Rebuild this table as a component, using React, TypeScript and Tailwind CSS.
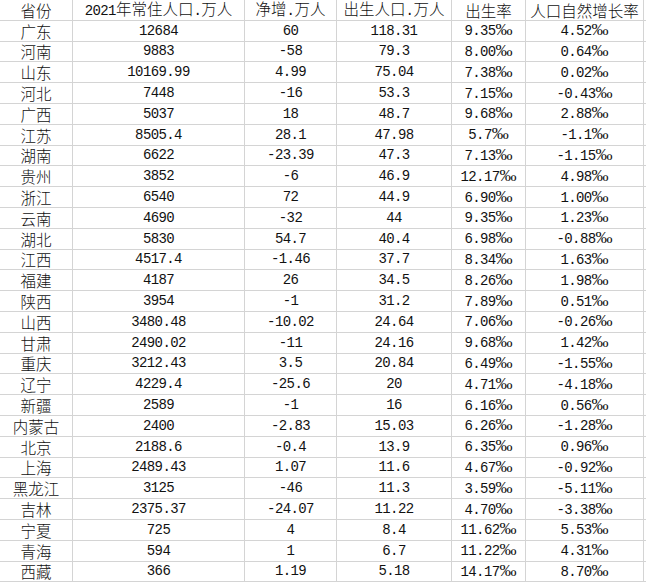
import React from "react";

const rows: string[][] = [
  ["广东", "12684", "60", "118.31", "9.35‰", "4.52‰"],
  ["河南", "9883", "-58", "79.3", "8.00‰", "0.64‰"],
  ["山东", "10169.99", "4.99", "75.04", "7.38‰", "0.02‰"],
  ["河北", "7448", "-16", "53.3", "7.15‰", "-0.43‰"],
  ["广西", "5037", "18", "48.7", "9.68‰", "2.88‰"],
  ["江苏", "8505.4", "28.1", "47.98", "5.7‰", "-1.1‰"],
  ["湖南", "6622", "-23.39", "47.3", "7.13‰", "-1.15‰"],
  ["贵州", "3852", "-6", "46.9", "12.17‰", "4.98‰"],
  ["浙江", "6540", "72", "44.9", "6.90‰", "1.00‰"],
  ["云南", "4690", "-32", "44", "9.35‰", "1.23‰"],
  ["湖北", "5830", "54.7", "40.4", "6.98‰", "-0.88‰"],
  ["江西", "4517.4", "-1.46", "37.7", "8.34‰", "1.63‰"],
  ["福建", "4187", "26", "34.5", "8.26‰", "1.98‰"],
  ["陕西", "3954", "-1", "31.2", "7.89‰", "0.51‰"],
  ["山西", "3480.48", "-10.02", "24.64", "7.06‰", "-0.26‰"],
  ["甘肃", "2490.02", "-11", "24.16", "9.68‰", "1.42‰"],
  ["重庆", "3212.43", "3.5", "20.84", "6.49‰", "-1.55‰"],
  ["辽宁", "4229.4", "-25.6", "20", "4.71‰", "-4.18‰"],
  ["新疆", "2589", "-1", "16", "6.16‰", "0.56‰"],
  ["内蒙古", "2400", "-2.83", "15.03", "6.26‰", "-1.28‰"],
  ["北京", "2188.6", "-0.4", "13.9", "6.35‰", "0.96‰"],
  ["上海", "2489.43", "1.07", "11.6", "4.67‰", "-0.92‰"],
  ["黑龙江", "3125", "-46", "11.3", "3.59‰", "-5.11‰"],
  ["吉林", "2375.37", "-24.07", "11.22", "4.70‰", "-3.38‰"],
  ["宁夏", "725", "4", "8.4", "11.62‰", "5.53‰"],
  ["青海", "594", "1", "6.7", "11.22‰", "4.31‰"],
  ["西藏", "366", "1.19", "5.18", "14.17‰", "8.70‰"],
];

const widths = ["w-[73px]", "w-[172px]", "w-[92px]", "w-[115px]", "w-[74px]", "w-[118px]"];

const cjk = "font-['Noto_Sans_CJK_SC',sans-serif] text-[15.5px] leading-[18px] font-light";
const mono = "font-['Liberation_Mono',monospace] text-[14px] leading-[18px] tracking-[-0.6px]";
const hcjk = "font-['Noto_Sans_CJK_SC',sans-serif] text-[15.5px] leading-[14px] font-light";
const hmono = "font-['Liberation_Mono',monospace] text-[14px] leading-[14px] tracking-[-0.6px]";

function Num({ v }: { v: string }) {
  const hasPermil = v.endsWith("‰");
  const base = hasPermil ? v.slice(0, -1) : v;
  return (
    <span className="inline-flex items-baseline whitespace-nowrap">
      <span className={mono}>{base}</span>
      {hasPermil && (
        <span className="font-['Liberation_Serif',serif] text-[17px] leading-[18px]">‰</span>
      )}
    </span>
  );
}

function Header({ parts }: { parts: { t: string; m?: boolean }[] }) {
  return (
    <span className="inline-flex items-baseline whitespace-nowrap">
      {parts.map((p, i) => (
        <span key={i} className={p.m ? hmono : hcjk}>
          {p.t}
        </span>
      ))}
    </span>
  );
}

export default function App() {
  const headers: { t: string; m?: boolean }[][] = [
    [{ t: "省份" }],
    [{ t: "2021", m: true }, { t: "年常住人口" }, { t: ".", m: true }, { t: "万人" }],
    [{ t: "净增" }, { t: ".", m: true }, { t: "万人" }],
    [{ t: "出生人口" }, { t: ".", m: true }, { t: "万人" }],
    [{ t: "出生率" }],
    [{ t: "人口自然增长率" }],
  ];
  return (
    <div className="w-[646px] h-[586px] bg-white text-[#111] overflow-hidden">
      <div className="flex h-[20.8px] border-b border-[#d4d4d4] box-border">
        {headers.map((h, i) => (
          <div
            key={i}
            className={`${widths[i]} shrink-0 border-r border-[#d4d4d4] flex items-center justify-center`}
          >
            <Header parts={h} />
          </div>
        ))}
      </div>
      {rows.map((r, ri) => (
        <div key={ri} className="flex h-[20.8px] border-b border-[#d4d4d4] box-border">
          {r.map((c, ci) => (
            <div
              key={ci}
              className={`${widths[ci]} shrink-0 border-r border-[#d4d4d4] flex items-center justify-center`}
            >
              {ci === 0 ? <span className={cjk}>{c}</span> : <Num v={c} />}
            </div>
          ))}
        </div>
      ))}
    </div>
  );
}
